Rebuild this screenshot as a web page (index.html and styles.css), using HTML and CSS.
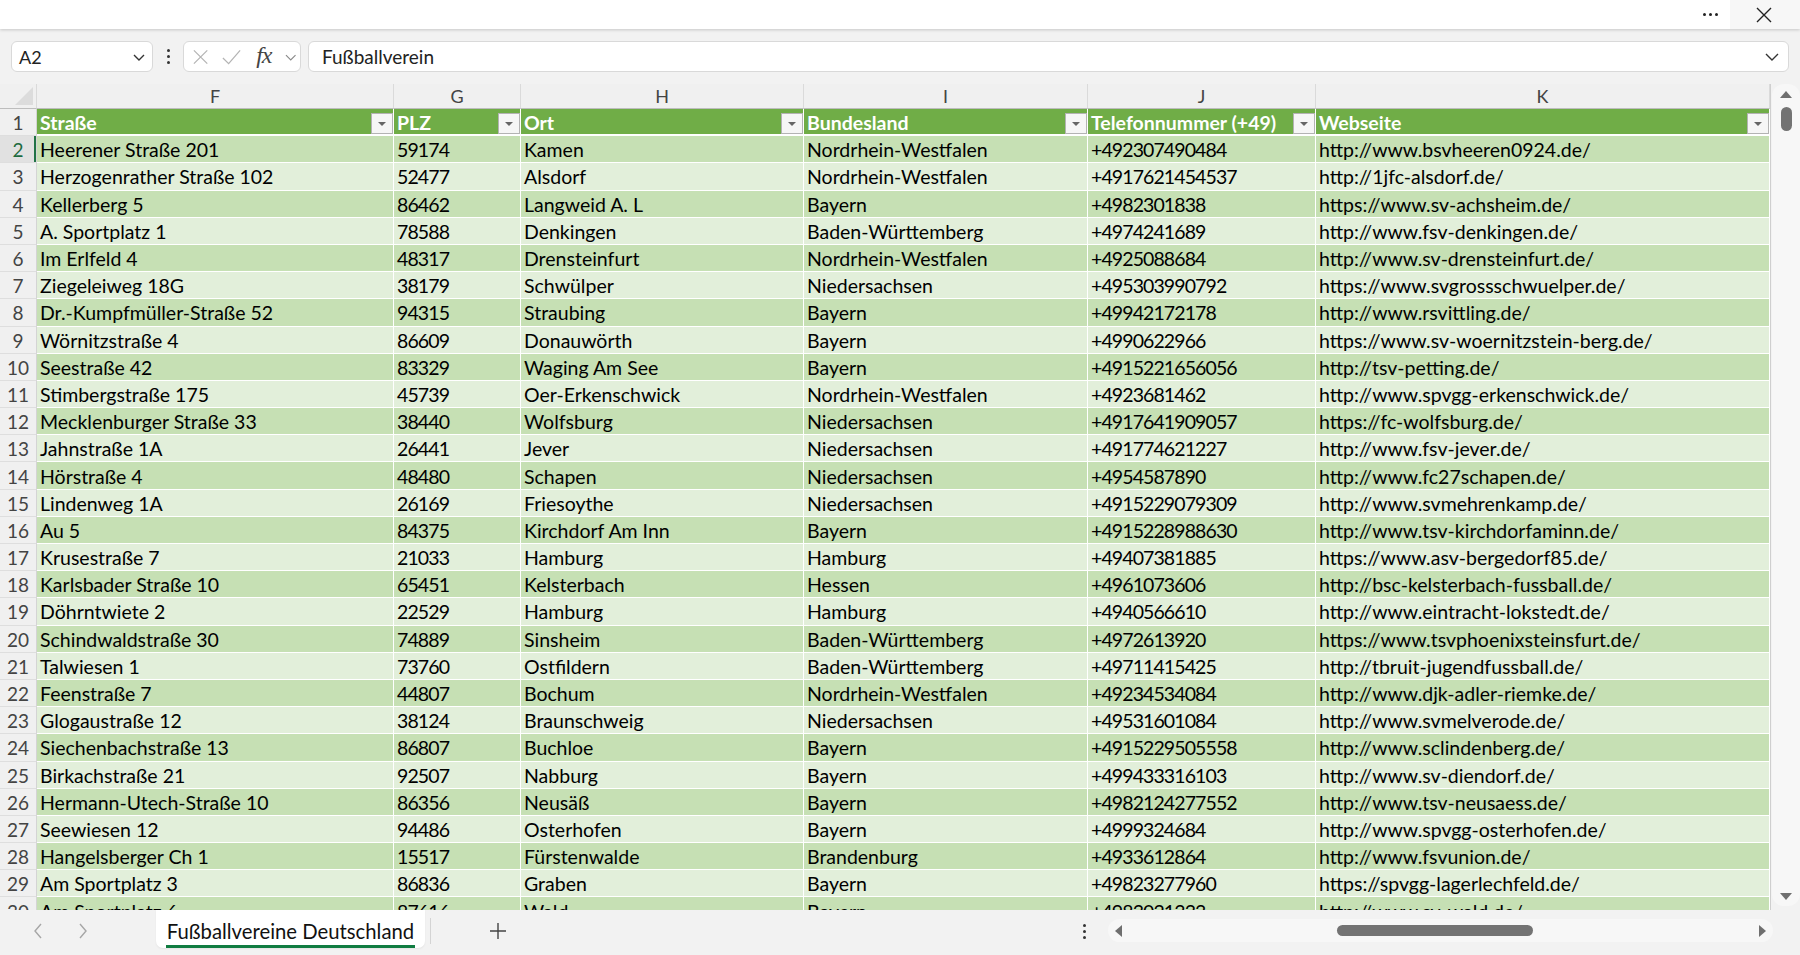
FILE: index.html
```html
<!DOCTYPE html>
<html lang="de">
<head>
    <meta charset="UTF-8">
    <title>Fußballvereine Deutschland</title>
    <link rel="stylesheet" href="styles.css">
</head>
<body>
    <div class="titlebar">
        <div class="tb-more">
            <span></span><span></span><span></span>
        </div>
        <div class="tb-close">
            <svg width="18" height="18" viewBox="0 0 18 18"><path d="M2 2 L16 16 M16 2 L2 16" stroke="#222" stroke-width="1.4" fill="none"/></svg>
        </div>
    </div>

    <div class="formula-bar">
        <div class="name-box">
            <span>A2</span>
            <svg width="14" height="10" viewBox="0 0 14 10"><path d="M2 3 L7 8 L12 3" stroke="#333" stroke-width="1.4" fill="none"/></svg>
        </div>
        <div class="fb-dots"><span></span><span></span><span></span></div>
        <div class="fx-group">
            <svg width="18" height="18" viewBox="0 0 18 18"><path d="M2 2 L16 16 M16 2 L2 16" stroke="#b4b4b4" stroke-width="1.3" fill="none"/></svg>
            <svg width="22" height="18" viewBox="0 0 22 18"><path d="M2 10 L8 16 L20 2" stroke="#b4b4b4" stroke-width="1.3" fill="none"/></svg>
            <span class="fx">fx</span>
            <svg width="12" height="8" viewBox="0 0 12 8"><path d="M1 2 L6 7 L11 2" stroke="#8a8a8a" stroke-width="1.2" fill="none"/></svg>
        </div>
        <div class="formula-input">
            <span>Fußballverein</span>
            <svg width="16" height="10" viewBox="0 0 16 10"><path d="M2 2 L8 8 L14 2" stroke="#333" stroke-width="1.4" fill="none"/></svg>
        </div>
    </div>

    <div class="sheet">
        <div class="grid" id="grid">
            <div class="row col-head">
                <div class="corner"><span class="corner-tri"></span></div>
                <div>F</div><div>G</div><div>H</div><div>I</div><div>J</div><div>K</div>
            </div>
            <div class="row table-head">
                <div class="rh">1</div>
                <div class="th"><span>Straße</span><span class="filter"></span></div>
                <div class="th"><span>PLZ</span><span class="filter"></span></div>
                <div class="th"><span>Ort</span><span class="filter"></span></div>
                <div class="th"><span>Bundesland</span><span class="filter"></span></div>
                <div class="th"><span>Telefonnummer (+49)</span><span class="filter"></span></div>
                <div class="th"><span>Webseite</span><span class="filter"></span></div>
            </div>
            <!-- data rows are added by the script below -->
        </div>
        <div class="vscroll">
            <div class="vtrack">
                <span class="arrow-up"></span>
                <span class="vthumb"></span>
                <span class="vspace"></span>
                <span class="arrow-down"></span>
            </div>
        </div>
    </div>

    <div class="tabbar">
        <div class="tab-nav">
            <svg width="12" height="18" viewBox="0 0 12 18"><path d="M9 2 L3 9 L9 16" stroke="#a6a6a6" stroke-width="1.4" fill="none"/></svg>
            <svg width="12" height="18" viewBox="0 0 12 18"><path d="M3 2 L9 9 L3 16" stroke="#a6a6a6" stroke-width="1.4" fill="none"/></svg>
        </div>
        <div class="sheet-tab"><span>Fußballvereine Deutschland</span></div>
        <div class="tab-sep"></div>
        <div class="tab-add">
            <svg width="18" height="18" viewBox="0 0 18 18"><path d="M9 1 V17 M1 9 H17" stroke="#444" stroke-width="1.4" fill="none"/></svg>
        </div>
        <div class="tab-fill"></div>
        <div class="tab-dots"><span></span><span></span><span></span></div>
        <div class="hscroll">
            <span class="arrow-left"></span>
            <span class="hthumb"></span>
            <span class="hspace"></span>
            <span class="arrow-right"></span>
        </div>
    </div>

    <script>
        const clubs = [
            ['Heerener Straße 201', '59174', 'Kamen', 'Nordrhein-Westfalen', '+492307490484', 'http://www.bsvheeren0924.de/'],
            ['Herzogenrather Straße 102', '52477', 'Alsdorf', 'Nordrhein-Westfalen', '+4917621454537', 'http://1jfc-alsdorf.de/'],
            ['Kellerberg 5', '86462', 'Langweid A. L', 'Bayern', '+4982301838', 'https://www.sv-achsheim.de/'],
            ['A. Sportplatz 1', '78588', 'Denkingen', 'Baden-Württemberg', '+4974241689', 'http://www.fsv-denkingen.de/'],
            ['Im Erlfeld 4', '48317', 'Drensteinfurt', 'Nordrhein-Westfalen', '+4925088684', 'http://www.sv-drensteinfurt.de/'],
            ['Ziegeleiweg 18G', '38179', 'Schwülper', 'Niedersachsen', '+495303990792', 'https://www.svgrossschwuelper.de/'],
            ['Dr.-Kumpfmüller-Straße 52', '94315', 'Straubing', 'Bayern', '+49942172178', 'http://www.rsvittling.de/'],
            ['Wörnitzstraße 4', '86609', 'Donauwörth', 'Bayern', '+4990622966', 'https://www.sv-woernitzstein-berg.de/'],
            ['Seestraße 42', '83329', 'Waging Am See', 'Bayern', '+4915221656056', 'http://tsv-petting.de/'],
            ['Stimbergstraße 175', '45739', 'Oer-Erkenschwick', 'Nordrhein-Westfalen', '+4923681462', 'http://www.spvgg-erkenschwick.de/'],
            ['Mecklenburger Straße 33', '38440', 'Wolfsburg', 'Niedersachsen', '+4917641909057', 'https://fc-wolfsburg.de/'],
            ['Jahnstraße 1A', '26441', 'Jever', 'Niedersachsen', '+491774621227', 'http://www.fsv-jever.de/'],
            ['Hörstraße 4', '48480', 'Schapen', 'Niedersachsen', '+4954587890', 'http://www.fc27schapen.de/'],
            ['Lindenweg 1A', '26169', 'Friesoythe', 'Niedersachsen', '+4915229079309', 'http://www.svmehrenkamp.de/'],
            ['Au 5', '84375', 'Kirchdorf Am Inn', 'Bayern', '+4915228988630', 'http://www.tsv-kirchdorfaminn.de/'],
            ['Krusestraße 7', '21033', 'Hamburg', 'Hamburg', '+49407381885', 'https://www.asv-bergedorf85.de/'],
            ['Karlsbader Straße 10', '65451', 'Kelsterbach', 'Hessen', '+4961073606', 'http://bsc-kelsterbach-fussball.de/'],
            ['Döhrntwiete 2', '22529', 'Hamburg', 'Hamburg', '+4940566610', 'http://www.eintracht-lokstedt.de/'],
            ['Schindwaldstraße 30', '74889', 'Sinsheim', 'Baden-Württemberg', '+4972613920', 'https://www.tsvphoenixsteinsfurt.de/'],
            ['Talwiesen 1', '73760', 'Ostfildern', 'Baden-Württemberg', '+49711415425', 'http://tbruit-jugendfussball.de/'],
            ['Feenstraße 7', '44807', 'Bochum', 'Nordrhein-Westfalen', '+49234534084', 'http://www.djk-adler-riemke.de/'],
            ['Glogaustraße 12', '38124', 'Braunschweig', 'Niedersachsen', '+49531601084', 'http://www.svmelverode.de/'],
            ['Siechenbachstraße 13', '86807', 'Buchloe', 'Bayern', '+4915229505558', 'http://www.sclindenberg.de/'],
            ['Birkachstraße 21', '92507', 'Nabburg', 'Bayern', '+499433316103', 'http://www.sv-diendorf.de/'],
            ['Hermann-Utech-Straße 10', '86356', 'Neusäß', 'Bayern', '+4982124277552', 'http://www.tsv-neusaess.de/'],
            ['Seewiesen 12', '94486', 'Osterhofen', 'Bayern', '+4999324684', 'http://www.spvgg-osterhofen.de/'],
            ['Hangelsberger Ch 1', '15517', 'Fürstenwalde', 'Brandenburg', '+4933612864', 'http://www.fsvunion.de/'],
            ['Am Sportplatz 3', '86836', 'Graben', 'Bayern', '+49823277960', 'https://spvgg-lagerlechfeld.de/'],
            ['Am Sportplatz 6', '87616', 'Wald', 'Bayern', '+4983021333', 'http://www.sv-wald.de/']
        ];

        function renderRows() {
            const grid = document.getElementById('grid');
            clubs.forEach((club, i) => {
                const n = i + 2;
                const row = document.createElement('div');
                row.className = 'row ' + (n % 2 === 0 ? 'band-dark' : 'band-light');
                let html = `<div class="rh${n === 2 ? ' sel' : ''}">${n}</div>`;
                club.forEach(value => {
                    html += `<div class="td">${value}</div>`;
                });
                row.innerHTML = html;
                grid.appendChild(row);
            });
        }

        renderRows();
    </script>
</body>
</html>
```

FILE: styles.css
```css
body {
    margin: 0;
    width: 1800px;
    height: 955px;
    overflow: hidden;
    background: #f2f2f2;
    font-family: Lato, "Noto Sans", sans-serif;
    color: #000;
}

/* top window bar */
.titlebar {
    height: 29px;
    background: #fff;
    display: flex;
    justify-content: flex-end;
    align-items: stretch;
    box-shadow: 0 1px 3px rgba(0,0,0,0.18);
    position: relative;
    z-index: 2;
}

.tb-more {
    width: 40px;
    display: flex;
    align-items: center;
    justify-content: center;
    gap: 3px;
}

.tb-more span {
    width: 3px;
    height: 3px;
    border-radius: 50%;
    background: #222;
}

.tb-close {
    width: 68px;
    display: flex;
    align-items: center;
    justify-content: center;
    background: #f7f7f7;
    padding-right: 2px;
}

/* formula bar */
.formula-bar {
    height: 55px;
    box-sizing: border-box;
    padding: 12px 11px 0 11px;
    display: flex;
    align-items: flex-start;
}

.name-box,
.fx-group,
.formula-input {
    height: 31px;
    box-sizing: border-box;
    background: #fff;
    border: 1px solid #d9d9d9;
    border-radius: 6px;
    display: flex;
    align-items: center;
}

.name-box {
    width: 142px;
    padding: 0 6px 0 7px;
    justify-content: space-between;
    font-size: 18px;
    color: #222;
}

.fb-dots {
    width: 30px;
    height: 31px;
    display: flex;
    flex-direction: column;
    align-items: center;
    justify-content: center;
    gap: 3px;
}

.fb-dots span,
.tab-dots span {
    width: 3px;
    height: 3px;
    border-radius: 50%;
    background: #333;
}

.fx-group {
    width: 118px;
    padding: 0 4px 0 8px;
    gap: 12px;
}

.fx {
    font-family: "Liberation Serif", serif;
    font-style: italic;
    font-size: 24px;
    color: #444;
    margin-left: 2px;
    margin-right: 1px;
    letter-spacing: -1px;
    line-height: 1;
    padding-bottom: 3px;
}

.formula-input {
    flex: 1;
    margin-left: 7px;
    padding: 0 8px 0 13px;
    justify-content: space-between;
    font-size: 19px;
    color: #222;
}

/* sheet */
.sheet {
    height: 826px;
    display: flex;
}

.grid {
    width: 1770px;
    height: 826px;
    overflow: hidden;
    background: #fff;
}

.row {
    display: grid;
    grid-template-columns: 37px 357px 127px 283px 284px 228px 454px;
    height: 27.2px;
    font-size: 19.5px;
}

.row > div {
    box-sizing: border-box;
    border-right: 1px solid #fff;
    border-bottom: 1px solid #fff;
    display: flex;
    align-items: center;
    white-space: nowrap;
    overflow: hidden;
    padding-top: 1px;
}

.col-head {
    height: 25px;
}

.col-head > div {
    background: #f0f0f0;
    justify-content: center;
    font-size: 18px;
    color: #444;
    border-right: 1px solid #dadada;
    border-bottom: 1px solid #bdbdbd;
    padding-top: 0;
}

.corner {
    position: relative;
}

.corner-tri {
    position: absolute;
    right: 3px;
    bottom: 3px;
    width: 0;
    height: 0;
    border-left: 18px solid transparent;
    border-bottom: 18px solid #dcdcdc;
}

.rh {
    background: #f0f0f0;
    justify-content: center;
    color: #444;
    font-size: 19px;
    border-right: 1px solid #d4d4d4 !important;
    border-bottom: 1px solid #dedede !important;
}

.rh.sel {
    background: #e1e1e1;
    color: #1d6b3f;
    box-shadow: inset -2px 0 #217346;
}

.table-head .th {
    background: #70ad47;
    color: #fff;
    font-weight: bold;
    justify-content: space-between;
    padding-left: 3px;
    border-bottom-width: 2px;
}

.filter {
    width: 22px;
    height: 21px;
    box-sizing: border-box;
    align-self: flex-end;
    background: #f6f6f6;
    border: 1px solid #b3b3b3;
    position: relative;
}

.filter::after {
    content: "";
    position: absolute;
    left: 6px;
    top: 8px;
    border-left: 4px solid transparent;
    border-right: 4px solid transparent;
    border-top: 4px solid #666;
}

.td {
    padding-left: 3px;
}

/* digits of Calibri are narrower than those of Lato */
.td:nth-child(3),
.td:nth-child(6) {
    letter-spacing: -0.9px;
}

.band-dark .td {
    background: #c6e0b4;
}

.band-light .td {
    background: #e2efda;
}

/* vertical scrollbar */
.vscroll {
    width: 30px;
    border-left: 1px solid #cfcfcf;
    box-sizing: border-box;
    padding: 0 0 4px 1px;
}

.vtrack {
    height: 100%;
    background: #f7f7f7;
    border-radius: 12px;
    display: flex;
    flex-direction: column;
    align-items: center;
    padding-top: 7px;
    box-sizing: border-box;
}

.arrow-up {
    border-left: 6px solid transparent;
    border-right: 6px solid transparent;
    border-bottom: 7px solid #6f6f6f;
}

.vthumb {
    width: 11px;
    height: 24px;
    border-radius: 6px;
    background: #737373;
    margin-top: 9px;
}

.vspace {
    flex: 1;
}

.arrow-down {
    border-left: 6px solid transparent;
    border-right: 6px solid transparent;
    border-top: 7px solid #6f6f6f;
    margin-bottom: 6px;
}

/* sheet tabs */
.tabbar {
    height: 45px;
    display: flex;
    align-items: flex-start;
}

.tab-nav {
    width: 156px;
    height: 42px;
    display: flex;
    align-items: center;
    padding-left: 32px;
    gap: 33px;
    box-sizing: border-box;
}

.sheet-tab {
    width: 269px;
    height: 38px;
    box-sizing: border-box;
    background: #fff;
    border-radius: 0 0 7px 7px;
    display: flex;
    align-items: center;
    justify-content: center;
    padding-top: 2px;
    font-size: 20.3px;
    color: #111;
    box-shadow: 0 1px 2px rgba(0,0,0,0.06);
}

.sheet-tab span {
    border-bottom: 3px solid #107c41;
    padding: 0 1px 2px;
    margin-top: 6px;
}

.tab-sep {
    width: 1px;
    height: 26px;
    margin: 8px 0 0 5px;
    background: #d4d4d4;
}

.tab-add {
    width: 30px;
    height: 42px;
    margin-left: 52px;
    display: flex;
    align-items: center;
    justify-content: center;
}

.tab-fill {
    flex: 1;
}

.tab-dots {
    width: 24px;
    height: 42px;
    display: flex;
    flex-direction: column;
    align-items: center;
    justify-content: center;
    gap: 3px;
    margin-right: 12px;
}

.hscroll {
    width: 665px;
    height: 23px;
    margin: 9px 27px 0 0;
    background: #f7f7f7;
    border-radius: 12px;
    display: flex;
    align-items: center;
    padding: 0 7px;
    box-sizing: border-box;
}

.arrow-left {
    border-top: 6px solid transparent;
    border-bottom: 6px solid transparent;
    border-right: 7px solid #6f6f6f;
}

.hthumb {
    width: 196px;
    height: 11px;
    border-radius: 6px;
    background: #737373;
    margin-left: 215px;
}

.hspace {
    flex: 1;
}

.arrow-right {
    border-top: 6px solid transparent;
    border-bottom: 6px solid transparent;
    border-left: 7px solid #6f6f6f;
}
```
